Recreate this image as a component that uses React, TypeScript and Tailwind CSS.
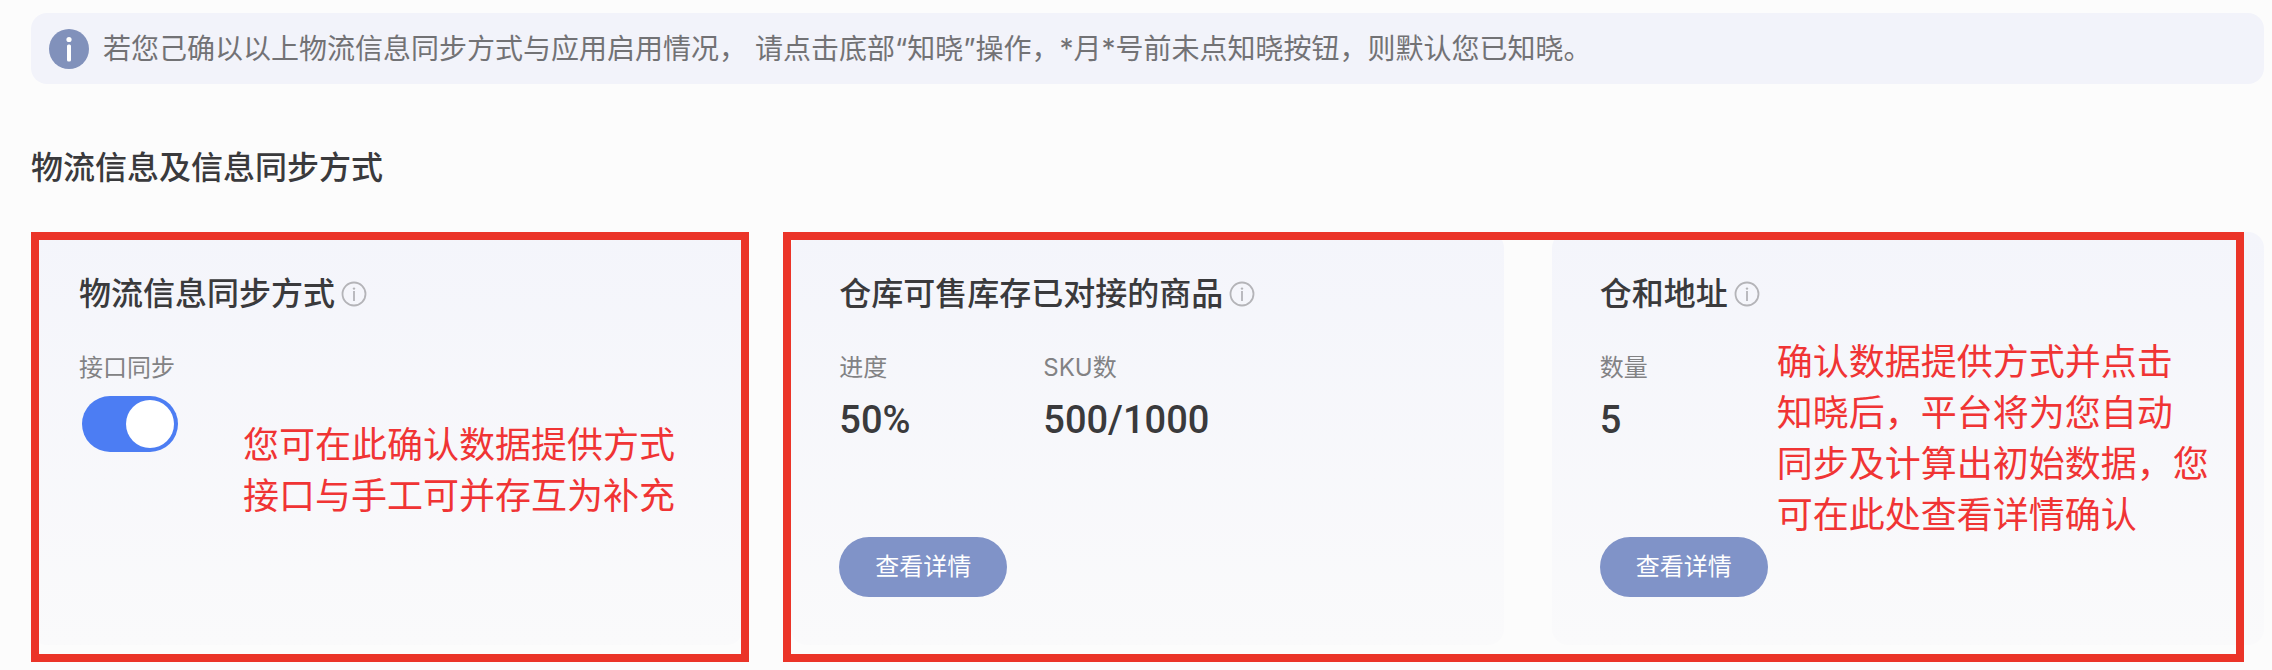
import React, { useState } from 'react';

interface Metric {
  label: string;
  value: string;
}

interface SyncCardProps {
  title: string;
  children: React.ReactNode;
}

interface DetailCardProps {
  title: string;
  metrics: Metric[];
}

const stockMetrics: Metric[] = [
  { label: '进度', value: '50%' },
  { label: 'SKU数', value: '500/1000' },
];

const addressMetrics: Metric[] = [{ label: '数量', value: '5' }];

const NoticeIcon: React.FC = () => (
  <svg className="size-10 shrink-0" viewBox="0 0 40 40" aria-hidden="true">
    <circle cx="20" cy="20" r="20" fill="#8191bb" />
    <circle cx="20" cy="10.5" r="2.6" fill="#fff" />
    <rect x="18" y="15.5" width="4" height="17" rx="1.5" fill="#fff" />
  </svg>
);

const InfoIcon: React.FC = () => (
  <svg className="size-[26px]" viewBox="0 0 26 26" fill="none" aria-hidden="true">
    <circle cx="13" cy="13" r="11.5" stroke="#b4b4b8" strokeWidth="1.8" />
    <circle cx="13" cy="7.6" r="1.2" fill="#b4b4b8" />
    <path d="M13 10v10" stroke="#b4b4b8" strokeWidth="1.8" />
  </svg>
);

const SyncCard: React.FC<SyncCardProps> = ({ title, children }) => (
  <section className="relative flex min-h-[413px] flex-col items-start rounded-2xl bg-linear-to-b from-[#f4f5fb] to-[#fafafb] px-12 pt-[38px] pb-12">
    <div className="mb-8 flex items-center gap-1.5">
      <h3 className="text-[32px] leading-[48px] font-medium text-[#3a3a3c]">{title}</h3>
      <button type="button" aria-label={`${title}说明`}>
        <InfoIcon />
      </button>
    </div>
    {children}
  </section>
);

const DetailCard: React.FC<DetailCardProps> = ({ title, metrics }) => (
  <SyncCard title={title}>
    <dl className="flex">
      {metrics.map((metric) => (
        <div key={metric.label} className="min-w-[204px]">
          <dt className="text-2xl leading-9 text-[#828284]">{metric.label}</dt>
          <dd className="mt-2.5 font-[Roboto,sans-serif] text-[38px] leading-[48px] font-medium text-[#3a3a3c]">
            {metric.value}
          </dd>
        </div>
      ))}
    </dl>
    <button type="button" className="mt-auto h-[60px] rounded-full bg-[#8093c8] px-9 text-2xl text-white">
      查看详情
    </button>
  </SyncCard>
);

const App: React.FC = () => {
  const [apiSync, setApiSync] = useState(true);

  return (
    <main
      lang="zh-CN"
      className="min-h-screen bg-[#fcfcfc] pt-[13px] pr-2 pb-6 pl-[31px] font-[Inter,'Noto_Sans_CJK_SC',sans-serif]"
    >
      <div className="flex min-h-[71px] items-center gap-3.5 rounded-2xl bg-[#f2f3fa] px-[18px]">
        <NoticeIcon />
        <p className="text-[28px] leading-10 text-[#727275]">
          若您己确以以上物流信息同步方式与应用启用情况， 请点击底部“知晓”操作，*月*号前未点知晓按钮，则默认您已知晓。
        </p>
      </div>

      <h2 className="mt-[60px] text-[32px] leading-[48px] font-medium text-[#3a3a3c]">物流信息及信息同步方式</h2>

      <div className="relative mt-10 grid grid-cols-3 gap-12">
        <SyncCard title="物流信息同步方式">
          <label htmlFor="api-sync" className="text-2xl leading-9 text-[#828284]">
            接口同步
          </label>
          <input
            id="api-sync"
            type="checkbox"
            role="switch"
            checked={apiSync}
            onChange={(e) => setApiSync(e.target.checked)}
            className="mt-2.5 ml-[3px] h-14 w-24 appearance-none rounded-full bg-[#c4c6cf] p-1 before:block before:size-12 before:rounded-full before:bg-white checked:bg-[#4c7df3] checked:before:ml-auto"
          />
          <p className="absolute top-[188px] left-[212px] text-4xl leading-[51px] whitespace-nowrap text-[#f03434]">
            您可在此确认数据提供方式
            <br />
            接口与手工可并存互为补充
          </p>
        </SyncCard>

        <DetailCard title="仓库可售库存已对接的商品" metrics={stockMetrics} />

        <div className="relative grid">
          <DetailCard title="仓和地址" metrics={addressMetrics} />
          <p className="absolute top-[105px] left-[225px] text-4xl leading-[51px] whitespace-nowrap text-[#f03434]">
            确认数据提供方式并点击
            <br />
            知晓后，平台将为您自动
            <br />
            同步及计算出初始数据，您
            <br />
            可在此处查看详情确认
          </p>
        </div>

        {/* red frames over the cards */}
        <div className="pointer-events-none absolute inset-x-0 top-0 -bottom-[17px] grid grid-cols-3 gap-12">
          <div className="-mr-1.5 border-8 border-[#eb3428]" />
          <div className="col-span-2 mr-5 -ml-2 border-8 border-[#eb3428]" />
        </div>
      </div>
    </main>
  );
};

export default App;
